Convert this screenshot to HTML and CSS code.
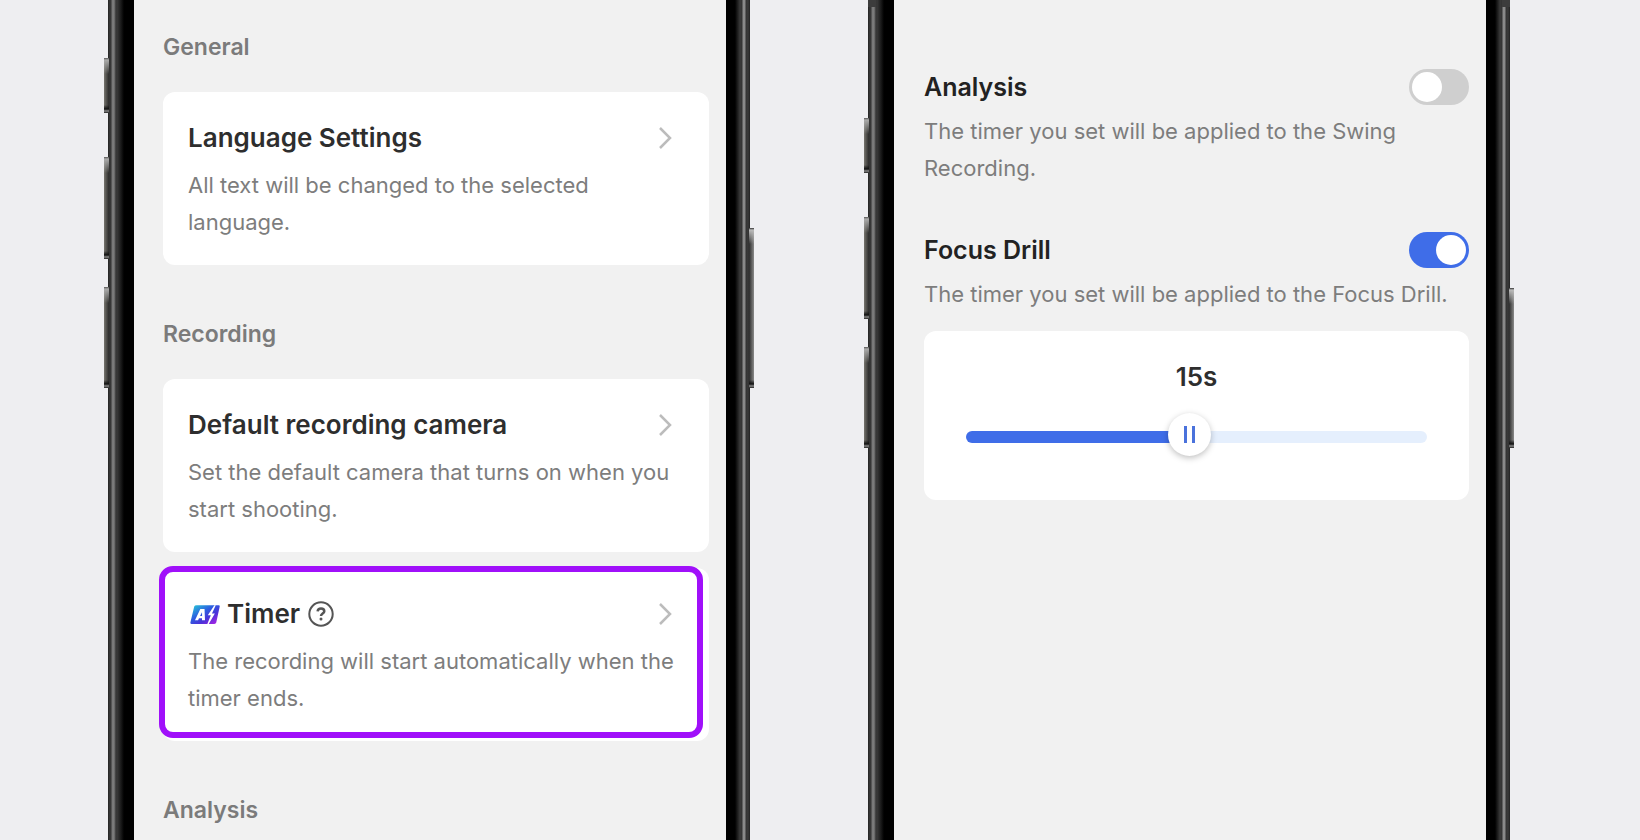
FILE: index.html
```html
<!DOCTYPE html>
<html lang="en">
<head>
<meta charset="utf-8">
<meta name="viewport" content="width=device-width, initial-scale=1">
<title>Timer settings</title>
<link rel="stylesheet" href="styles.css">
</head>
<body>
<main class="stage">
  <section class="phone">
    <span class="side-key key-action"></span>
    <span class="side-key key-up"></span>
    <span class="side-key key-down"></span>
    <span class="side-key key-power"></span>
    <div class="screen screen-settings">
      <h2 class="group-title">General</h2>
      <article class="card">
        <div class="card-head">
          <h3 class="title">Language Settings</h3>
          <button class="open" type="button" aria-label="Open language settings">
            <svg class="chevron" viewBox="0 0 14 24"><path d="M2 2l10 10L2 22"/></svg>
          </button>
        </div>
        <p class="text">All text will be changed to the selected language.</p>
      </article>

      <h2 class="group-title">Recording</h2>
      <article class="card">
        <div class="card-head">
          <h3 class="title">Default recording camera</h3>
          <button class="open" type="button" aria-label="Open default recording camera">
            <svg class="chevron" viewBox="0 0 14 24"><path d="M2 2l10 10L2 22"/></svg>
          </button>
        </div>
        <p class="text">Set the default camera that turns on when you start shooting.</p>
      </article>
      <article class="card card-marked">
        <div class="card-head">
          <svg class="ai-logo" viewBox="0 0 32 20" aria-label="AI" role="img">
            <defs>
              <linearGradient id="ai" x1="0" y1="0" x2="1" y2="1">
                <stop offset="0" stop-color="#27d3d6"/>
                <stop offset="0.4" stop-color="#2c5fe0"/>
                <stop offset="0.65" stop-color="#4a32d8"/>
                <stop offset="1" stop-color="#c020e8"/>
              </linearGradient>
            </defs>
            <path fill="url(#ai)" d="M7 0H30.500Q32 0 31.700 1.500L28 18.500Q27.600 20 26 20H1.500Q0 20 .4 18.500L4.500 1.500Q5 0 7 0Z"/>
            <path fill="#fff" fill-rule="evenodd" d="M11 4H15.500L16 16H12.800V14H9.600L8.600 16H5.300ZM12.800 7.500L10.700 11.700H12.900Z"/>
            <path fill="#fff" d="M26 0L19 10.700H22.200L18.500 20H20L26.500 8.800H23.400L27.500 0Z"/>
          </svg>
          <h3 class="title">Timer</h3>
          <button class="help" type="button" aria-label="About the timer">
            <svg class="help-icon" viewBox="0 0 26 26"><circle cx="13" cy="13" r="11.700"/><path class="hook" d="M9.600 10.400C9.800 8.600 11.100 7.500 13 7.500C15 7.500 16.300 8.700 16.300 10.300C16.300 12.500 13 12.700 13 15"/><circle class="dot" cx="13" cy="18" r="1.500"/></svg>
          </button>
          <button class="open" type="button" aria-label="Open timer">
            <svg class="chevron" viewBox="0 0 14 24"><path d="M2 2l10 10L2 22"/></svg>
          </button>
        </div>
        <p class="text">The recording will start automatically when the timer ends.</p>
      </article>

      <h2 class="group-title">Analysis</h2>
    </div>
  </section>

  <section class="phone phone-low">
    <span class="side-key key-action"></span>
    <span class="side-key key-up"></span>
    <span class="side-key key-down"></span>
    <span class="side-key key-power"></span>
    <div class="screen screen-timer">
      <div class="option">
        <div class="option-head">
          <label class="title" for="analysis">Analysis</label>
          <input class="switch" id="analysis" type="checkbox" role="switch">
        </div>
        <p class="text">The timer you set will be applied to the Swing Recording.</p>
      </div>
      <div class="option">
        <div class="option-head">
          <label class="title" for="drill">Focus Drill</label>
          <input class="switch" id="drill" type="checkbox" role="switch" checked>
        </div>
        <p class="text">The timer you set will be applied to the Focus Drill.</p>
        <div class="slider-card">
          <label class="title" for="seconds">15s</label>
          <input class="slider" id="seconds" type="range" min="1" max="30" value="15">
        </div>
      </div>
    </div>
  </section>
</main>
</body>
</html>
```

FILE: styles.css
```css
* {
  box-sizing: border-box;
  margin: 0;
}

body {
  background: #eeeef1;
  color: #2e2e2e;
  font-family: Inter, "Liberation Sans", sans-serif;
}

.stage {
  display: grid;
  grid-template-columns: 1fr 1fr;
  gap: 118px;
  min-height: 100vh;
  padding: 0 130px 0 108px;
}

.phone {
  position: relative;
  padding: 0 24px 0 26px;
  background:
    linear-gradient(90deg, #222 0, #3a3a3a 2px, #333 3px, #777 4px, #7c7c7c 6px, #333 8px, #3a3a3a 9px, #222 12px, #000 16px, #000 26px) left / 26px 100% no-repeat,
    linear-gradient(270deg, #222 0, #3a3a3a 2px, #333 4px, #888 5px, #8a8a8a 7px, #333 8px, #3a3a3a 10px, #222 12px, #000 15px, #000 24px) right / 24px 100% no-repeat;
}

.phone-low {
  --drop: 60px;
}

.phone-low::before,
.phone-low::after {
  content: "";
  position: absolute;
  top: 0;
  width: 8px;
  height: 7px;
  background: #3c3c3c;
}

.phone-low::before {
  left: 0;
}

.phone-low::after {
  right: 0;
}

.side-key {
  position: absolute;
  left: -4px;
  width: 5px;
  background: linear-gradient(#555 0, #aaa 2px, transparent 16px, transparent calc(100% - 8px), #111 calc(100% - 4px), #888 calc(100% - 2px), #222 100%), linear-gradient(90deg, #77756f, #2b2b2b);
}

.key-action {
  top: calc(58px + var(--drop, 0px));
  height: 55px;
}

.key-up {
  top: calc(157px + var(--drop, 0px));
  height: 102px;
}

.key-down {
  top: calc(287px + var(--drop, 0px));
  height: 101px;
}

.key-power {
  top: calc(228px + var(--drop, 0px));
  right: -4px;
  left: auto;
  height: 160px;
  background: linear-gradient(#333 0, #bbb 2px, transparent 16px, transparent calc(100% - 8px), #111 calc(100% - 4px), #888 calc(100% - 2px), #222 100%), linear-gradient(270deg, #8a8a8a, #2b2b2b);
}

.screen {
  height: 100%;
  background: #f1f1f1;
}

.screen-settings {
  padding: 31px 17px 0 29px;
}

.screen-timer {
  display: flex;
  flex-direction: column;
  gap: 45px;
  padding: 69px 17px 0 30px;
}

.group-title {
  color: #7b7b7b;
  font-size: 23px;
  font-weight: 600;
  line-height: 32px;
}

.group-title + .card {
  margin-top: 29px;
}

.card {
  position: relative;
  padding: 30px 25px 24px;
  border-radius: 12px;
  background: #fff;
}

.card + .group-title {
  margin-top: 53px;
}

.card + .card {
  margin-top: 16px;
}

.card-marked::after {
  content: "";
  position: absolute;
  inset: -2px 6px 3px -4px;
  border: 6px solid #a010fa;
  border-radius: 14px;
  pointer-events: none;
}

.card-head {
  display: flex;
  align-items: center;
  padding-right: 12px;
  margin-bottom: 13px;
}

.title {
  font-size: 26px;
  font-weight: 600;
  line-height: 32px;
}

.text {
  color: #7d7d7d;
  font-size: 22px;
  line-height: 37px;
}

button {
  display: flex;
  padding: 0;
  border: 0;
  background: none;
}

.open {
  margin-left: auto;
}

.chevron {
  width: 14px;
  height: 24px;
  fill: none;
  stroke: #bcbcbc;
  stroke-width: 2.5;
}

.ai-logo {
  width: 30px;
  height: 19px;
  margin: 0 7px 0 2px;
}

.help {
  margin-left: 8px;
}

.help-icon {
  width: 26px;
  height: 26px;
  fill: none;
  stroke: #555;
  stroke-width: 2;
}

.help-icon .hook {
  stroke-width: 2.5;
}

.help-icon .dot {
  fill: #555;
  stroke: none;
}

.option-head {
  display: flex;
  align-items: center;
  justify-content: space-between;
  margin-bottom: 8px;
}

.option-head .title {
  color: #222;
  font-size: 25px;
}

.switch {
  appearance: none;
  width: 60px;
  height: 36px;
  padding: 3px;
  border-radius: 18px;
  background: #cfcfcf;
}

.switch::before {
  content: "";
  display: block;
  width: 30px;
  height: 30px;
  border-radius: 50%;
  background: #fff;
}

.switch:checked {
  background: #3f6de8;
}

.switch:checked::before {
  margin-left: auto;
}

.slider-card {
  display: flex;
  flex-direction: column;
  align-items: center;
  gap: 22px;
  margin-top: 18px;
  padding: 30px 42px 41px;
  border-radius: 12px;
  background: #fff;
}

.slider {
  appearance: none;
  width: 100%;
  height: 44px;
  background: none;
}

.slider::-webkit-slider-runnable-track {
  height: 12px;
  border-radius: 6px;
  background: linear-gradient(90deg, #3f6de8 48%, #e5effd 48%);
}

.slider::-webkit-slider-thumb {
  appearance: none;
  width: 43px;
  height: 43px;
  margin-top: -18px;
  border-radius: 50%;
  background:
    linear-gradient(#4a72dc, #4a72dc) 16px 13px / 3px 17px no-repeat,
    linear-gradient(#4a72dc, #4a72dc) 24px 13px / 3px 17px no-repeat,
    #fff;
  box-shadow: 0 2px 6px rgba(0, 0, 0, 0.25);
}
```
